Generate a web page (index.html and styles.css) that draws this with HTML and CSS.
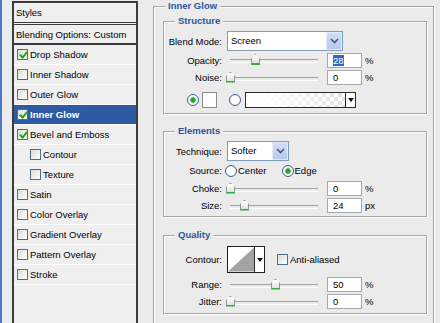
FILE: index.html
```html
<!DOCTYPE html>
<html lang="en">
<head>
    <meta charset="UTF-8">
    <title>Layer Style - Inner Glow</title>
    <link rel="stylesheet" href="styles.css">
</head>
<body>
<div class="window">
    <div class="edge"></div>

    <!-- Lista de estilos -->
    <ul class="styles-list">
        <li class="head">Styles</li>
        <li class="blend">Blending Options: Custom</li>
        <li><span class="check on"></span>Drop Shadow</li>
        <li><span class="check"></span>Inner Shadow</li>
        <li><span class="check"></span>Outer Glow</li>
        <li class="selected"><span class="check on"></span>Inner Glow</li>
        <li><span class="check on"></span>Bevel and Emboss</li>
        <li class="sub"><span class="check"></span>Contour</li>
        <li class="sub"><span class="check"></span>Texture</li>
        <li><span class="check"></span>Satin</li>
        <li><span class="check"></span>Color Overlay</li>
        <li><span class="check"></span>Gradient Overlay</li>
        <li><span class="check"></span>Pattern Overlay</li>
        <li><span class="check"></span>Stroke</li>
    </ul>

    <div class="options">
        <fieldset class="group outer">
            <legend>Inner Glow</legend>

            <fieldset class="group inner structure">
                <legend>Structure</legend>
                <div class="row h20">
                    <span class="label">Blend Mode:</span>
                    <div class="select wide"><span class="value">Screen</span><span class="drop"><svg width="9" height="6" viewBox="0 0 9 6"><polyline points="1,1 4.5,4.5 8,1" fill="none" stroke="#44598a" stroke-width="1.6"/></svg></span></div>
                </div>
                <div class="row h18">
                    <span class="label">Opacity:</span>
                    <div class="slider"><span class="thumb" style="left:24px"></span></div>
                    <span class="field"><span class="sel">28</span></span><span class="unit">%</span>
                </div>
                <div class="row h17">
                    <span class="label">Noise:</span>
                    <div class="slider"><span class="thumb" style="left:-1px"></span></div>
                    <span class="field">0</span><span class="unit">%</span>
                </div>
                <div class="row h16 colors">
                    <span class="radio on"></span>
                    <span class="swatch"></span>
                    <span class="radio second"></span>
                    <div class="gradient"><span class="ramp"></span><span class="arrow"><i class="tri"></i></span></div>
                </div>
            </fieldset>

            <fieldset class="group inner elements">
                <legend>Elements</legend>
                <div class="row h20">
                    <span class="label">Technique:</span>
                    <div class="select narrow"><span class="value">Softer</span><span class="drop"><svg width="9" height="6" viewBox="0 0 9 6"><polyline points="1,1 4.5,4.5 8,1" fill="none" stroke="#44598a" stroke-width="1.6"/></svg></span></div>
                </div>
                <div class="row h19">
                    <span class="label">Source:</span>
                    <span class="radio source"></span><span>Center</span>
                    <span class="radio on source edge-radio"></span><span>Edge</span>
                </div>
                <div class="row h17">
                    <span class="label">Choke:</span>
                    <div class="slider"><span class="thumb" style="left:-1px"></span></div>
                    <span class="field">0</span><span class="unit">%</span>
                </div>
                <div class="row h17">
                    <span class="label">Size:</span>
                    <div class="slider"><span class="thumb" style="left:13px"></span></div>
                    <span class="field">24</span><span class="unit">px</span>
                </div>
            </fieldset>

            <fieldset class="group inner quality">
                <legend>Quality</legend>
                <div class="row h27">
                    <span class="label">Contour:</span>
                    <div class="contour">
                        <svg width="27" height="25" viewBox="0 0 27 25"><rect width="27" height="25" fill="#fff"/><polygon points="0,25 27,0 27,25" fill="#a3a3a3"/></svg>
                        <span class="arrow"><i class="tri"></i></span>
                    </div>
                    <span class="check anti"></span><span>Anti-aliased</span>
                </div>
                <div class="row h17 gap3">
                    <span class="label">Range:</span>
                    <div class="slider"><span class="thumb" style="left:44px"></span></div>
                    <span class="field">50</span><span class="unit">%</span>
                </div>
                <div class="row h17">
                    <span class="label">Jitter:</span>
                    <div class="slider"><span class="thumb" style="left:-1px"></span></div>
                    <span class="field">0</span><span class="unit">%</span>
                </div>
            </fieldset>
        </fieldset>
    </div>
</div>
</body>
</html>
```

FILE: styles.css
```css
* {
    box-sizing: border-box;
}

body {
    margin: 0;
    width: 440px;
    height: 323px;
    overflow: hidden;
    background-color: #ebebeb;
    font-family: "Liberation Sans", Arial, sans-serif;
    font-size: 9.5px;
    color: #000;
}

.window {
    display: flex;
    height: 323px;
}

.edge {
    flex: none;
    width: 2px;
    background-color: #4a7bc4;
}

/* Lista de la izquierda (sigue por debajo del borde) */
.styles-list {
    flex: none;
    list-style: none;
    margin: 1px 0 0 10px;
    padding: 0;
    width: 126px;
    height: 322px;
    border: 2px solid #3c3c3c;
    border-bottom: none;
    background-color: #efefef;
}

.styles-list li {
    display: flex;
    align-items: center;
    gap: 2px;
    height: 20px;
    padding-left: 3px;
    border-bottom: 1px solid #fff;
}

.styles-list li.head {
    height: 22px;
    padding-left: 2px;
    border-bottom: 3px double #3c3c3c;
}

.styles-list li.blend {
    height: 20px;
    padding-left: 2px;
    border-bottom: 2px solid #3c3c3c;
}

.styles-list li.sub {
    padding-left: 16px;
}

.styles-list li.selected {
    background-color: #2f5ba5;
    color: #fff;
    font-weight: bold;
}

.check {
    flex: none;
    position: relative;
    width: 11px;
    height: 11px;
    border: 1px solid #4f6e8f;
    background: linear-gradient(135deg, #dcdcd6, #fff);
}

.check.on::after {
    content: "";
    position: absolute;
    left: 3px;
    top: 0px;
    width: 3px;
    height: 6px;
    border: solid #21a121;
    border-width: 0 2px 2px 0;
    transform: rotate(40deg);
}

/* Panel derecho */
.options {
    flex: none;
    margin-left: 15px;
}

.group {
    margin: 0;
    padding: 0;
    border: 1px solid #a6a6a6;
    box-shadow: inset 1px 1px 0 #fff, 1px 1px 0 #fff;
}

.group legend {
    margin-left: 11px;
    padding: 0 3px;
    line-height: 12px;
    font-weight: bold;
    color: #2d55a0;
    background-color: #ebebeb;
}

.outer {
    width: 281px;
    height: 323px;
    border-bottom: none;
    box-shadow: inset 1px 1px 0 #fff, 1px 0 0 #fff;
}

.inner {
    margin: 0 6px 0 9px;
}

.structure {
    margin-top: 3px;
    padding: 4px 0 5px;
}

.elements {
    margin-top: 11px;
    padding: 4px 0 2px;
}

.quality {
    margin-top: 12px;
    padding: 5px 0 3px;
}

.row {
    display: flex;
    align-items: center;
}

.h16 { height: 16px; }
.h17 { height: 17px; }
.h18 { height: 18px; }
.h19 { height: 19px; }
.h20 { height: 20px; }
.h27 { height: 27px; }
.gap3 { margin-top: 3px; }

.label {
    flex: none;
    width: 58px;
    margin-right: 5px;
    text-align: right;
}

.select {
    display: flex;
    height: 20px;
    border: 1px solid #7f9db9;
    background-color: #fff;
}

.select.wide { width: 116px; }
.select.narrow { width: 62px; }

.select .value {
    flex: 1;
    padding-left: 3px;
    line-height: 18px;
}

.select .drop {
    display: flex;
    align-items: center;
    justify-content: center;
    width: 16px;
    border: 1px solid #e4ecfb;
    background: linear-gradient(#d3def6, #b6c8ec);
}

.slider {
    flex: none;
    position: relative;
    width: 95px;
    height: 14px;
    margin-right: 5px;
}

.slider::before {
    content: "";
    position: absolute;
    left: 3px;
    top: 6px;
    width: 88px;
    height: 2px;
    border-top: 1px solid #a0a0a0;
    border-bottom: 1px solid #fff;
}

.thumb {
    position: absolute;
    top: 1px;
    width: 9px;
    height: 11px;
    background: linear-gradient(#fff, #dfe3dc);
    border: 1px solid #8d9a8d;
    border-bottom: 2px solid #2fae3c;
    clip-path: polygon(50% 0, 100% 40%, 100% 100%, 0 100%, 0 40%);
}

.field {
    flex: none;
    width: 35px;
    height: 15px;
    margin-right: 3px;
    padding-left: 5px;
    border: 1px solid #a3a9af;
    background-color: #fff;
    line-height: 13px;
}

.field .sel {
    background-color: #316ac5;
    color: #fff;
}

.radio {
    flex: none;
    width: 12px;
    height: 12px;
    border-radius: 50%;
    border: 1px solid #3f5f8a;
    background: radial-gradient(circle, #fff 50%, #dedfda);
}

.radio.on {
    background: radial-gradient(circle, #2aa431 2.4px, #d9eed9 3px, #fff 4px, #e2e2dc);
}

.colors {
    margin-top: 6px;
    padding-left: 23px;
}

.swatch {
    flex: none;
    width: 15px;
    height: 16px;
    margin-left: 3px;
    border: 1px solid #8c8c8c;
    background-color: #fff;
}

.radio.second {
    margin-left: 12px;
}

.gradient {
    display: flex;
    width: 111px;
    height: 16px;
    margin-left: 4px;
    border: 1px solid #2b2b2b;
}

.gradient .ramp {
    flex: 1;
    background:
        linear-gradient(to right, #fff 15%, rgba(255, 255, 255, 0.3)),
        conic-gradient(#d4d4d4 25%, #fff 0 50%, #d4d4d4 0 75%, #fff 0) 0 0 / 8px 8px;
}

.arrow {
    flex: none;
    display: flex;
    align-items: center;
    justify-content: center;
    width: 10px;
    border-left: 1px solid #2b2b2b;
    background-color: #fff;
}

.tri {
    width: 0;
    height: 0;
    border-top: 4px solid #111;
    border-left: 3px solid transparent;
    border-right: 3px solid transparent;
}

.radio.source {
    margin-left: -2px;
    margin-right: 1px;
}

.radio.edge-radio {
    margin-left: 15px;
}

.contour {
    flex: none;
    display: flex;
    width: 38px;
    height: 27px;
    border: 1px solid #222;
    background-color: #fff;
}

.check.anti {
    margin-left: 12px;
    margin-right: 2px;
}
```
